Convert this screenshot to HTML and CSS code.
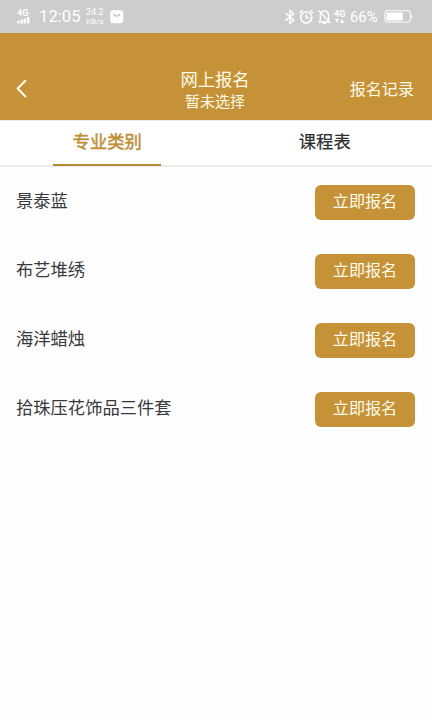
FILE: index.html
```
<!DOCTYPE html>
<html lang="zh-CN">
<head>
<meta charset="utf-8">
<title>网上报名</title>
<link rel="stylesheet" href="styles.css">
</head>
<body>
<div class="status">
  <div class="signal">
    <span class="net">4G</span>
    <svg width="13" height="7" viewBox="0 0 13 7" fill="currentColor"><rect x="0" y="4" width="2.4" height="2.5" rx=".6"/><rect x="3.3" y="2.8" width="2.4" height="3.7" rx=".6"/><rect x="6.6" y="1.4" width="2.4" height="5.1" rx=".6"/><rect x="9.9" y="0" width="2.4" height="6.5" rx=".6"/></svg>
  </div>
  <span class="time">12:05</span>
  <div class="speed"><span>24.2</span><span>KB/s</span></div>
  <svg class="mail" width="14" height="14" viewBox="0 0 14 14"><rect x=".3" y=".3" width="13" height="13" rx="3" fill="#fff"/><path d="M3.8 4.2Q6.8 8.2 9.8 4.2" fill="none" stroke="#bbb" stroke-width="1.2" stroke-linecap="round"/></svg>
  <div class="status-right">
    <svg class="bt" width="10" height="16" viewBox="0 0 10 16" fill="none" stroke="currentColor" stroke-width="1.5" stroke-linejoin="round" stroke-linecap="round"><path d="M1 4.5 8.8 11 5 14.5V1.2L8.8 4.7 1 11.2"/></svg>
    <svg class="alarm" width="15" height="16" viewBox="0 0 15 16" fill="none" stroke="currentColor" stroke-width="1.6" stroke-linecap="round"><circle cx="7.3" cy="8.5" r="5.5"/><path d="M7.3 5.7v3h2.4M1 3.6 3.3 1.7M13.6 3.6 11.3 1.7"/></svg>
    <svg class="bell" width="13" height="16" viewBox="0 0 13 16" fill="none" stroke="currentColor" stroke-width="1.4" stroke-linecap="round" stroke-linejoin="round"><path d="M2.3 5v6.5L1.2 13h8.7M4 2.9C6.5.8 10.5 2.2 10.5 6v5M1 1.8 12 13.7M5.1 14.4h2.3"/></svg>
    <div class="data">
      <span class="net">4G</span>
      <svg width="11" height="6" viewBox="0 0 11 6" fill="currentColor"><path d="M1 .8h4.2L3.1 5zM6 5h4.2L8.1.8z"/></svg>
    </div>
    <span class="percent">66%</span>
    <svg class="battery" width="30" height="14" viewBox="0 0 30 14"><rect x=".7" y=".7" width="25.8" height="11.4" rx="3.2" fill="none" stroke="#f5f5f5" stroke-width="1.2"/><rect x="2.3" y="2.4" width="16.5" height="8" rx="1.2" fill="#fff"/><path d="M27.4 4.2q2.2 2.2 0 4.4z" fill="#f5f5f5"/></svg>
  </div>
</div>
<header class="header">
  <svg class="back" width="14" height="20" viewBox="0 0 14 20" fill="none" stroke="currentColor" stroke-width="2.1" stroke-linecap="round" stroke-linejoin="round"><path d="M9.4 2.8 1.6 10.6l7.8 7.8"/></svg>
  <div class="heading"><h1>网上报名</h1><p>暂未选择</p></div>
  <a class="records">报名记录</a>
</header>
<nav class="tabs">
  <div class="tab active"><span>专业类别</span></div>
  <div class="tab"><span>课程表</span></div>
</nav>
<main class="list">
  <div class="row"><span>景泰蓝</span><button>立即报名</button></div>
  <div class="row"><span>布艺堆绣</span><button>立即报名</button></div>
  <div class="row"><span>海洋蜡烛</span><button>立即报名</button></div>
  <div class="row"><span>拾珠压花饰品三件套</span><button>立即报名</button></div>
</main>
</body>
</html>
```
FILE: styles.css
```
* { box-sizing: border-box; }
body {
  margin: 0;
  min-height: 720px;
  background: #fefefe;
  color: #38393d;
  font-family: "Noto Sans CJK SC", sans-serif;
}
svg { display: block; flex: none; }
.status {
  display: flex;
  align-items: center;
  height: 33px;
  padding: 0 18px 0 17px;
  background: #cdcdcd;
  color: #fff;
  font-family: Roboto, sans-serif;
}
.signal { width: 13px; }
.net {
  display: block;
  height: 8px;
  font-size: 9px;
  line-height: 8px;
  font-weight: 700;
}
.time { width: 42px; margin-left: 9px; font-size: 16.7px; line-height: 20px; }
.speed { width: 20px; margin-left: 5px; }
.speed span { display: block; font-size: 8px; line-height: 9px; white-space: nowrap; }
.speed span:first-child { height: 10px; margin-top: -1px; font-size: 9px; line-height: 10px; }
.mail { margin-left: 4px; }
.status-right { display: flex; align-items: center; margin-left: auto; }
.alarm { margin-left: 4px; }
.bell { margin-left: 4px; }
.data { width: 12px; margin-left: 3px; }
.percent { width: 30px; margin-left: 4px; font-size: 14.8px; line-height: 18px; }
.battery { margin-left: 4px; }
.header {
  display: grid;
  grid-template-columns: 1fr auto 1fr;
  align-items: center;
  height: 87px;
  padding: 23px 18px 0 16px;
  background: #c69238;
  color: #fffbea;
}
.heading { padding-top: 3px; text-align: center; }
.heading h1 { margin: 0; font-size: 17.3px; line-height: 22px; font-weight: 400; }
.heading p { margin: 0; font-size: 15px; line-height: 22px; }
.records { justify-self: end; font-size: 16.1px; line-height: 24px; }
.tabs {
  display: flex;
  height: 47px;
  border-top: 1px solid #ececec;
  border-bottom: 2px solid #ebebeb;
  background: #fff;
}
.tab {
  display: flex;
  flex: 1;
  justify-content: center;
  color: #2b2c30;
  font-size: 17.3px;
  line-height: 40px;
  -webkit-text-stroke: 0.2px currentColor;
}
.tab span { height: 45px; }
.active { padding-right: 3px; color: #bd8f37; -webkit-text-stroke-width: 0.5px; }
.active span { width: 108px; border-bottom: 2px solid #b68a35; text-align: center; }
.list { padding: 17.5px 17px 0 16px; }
.row {
  display: flex;
  justify-content: space-between;
  align-items: flex-start;
  height: 69.2px;
  font-size: 17.3px;
  line-height: 30px;
}
.row button {
  width: 100px;
  height: 35px;
  padding: 0 0 4px;
  border: 0;
  border-radius: 6px;
  background: #c69238;
  color: #fffbea;
  font-family: inherit;
  font-size: 16.1px;
  line-height: 31px;
}
```
